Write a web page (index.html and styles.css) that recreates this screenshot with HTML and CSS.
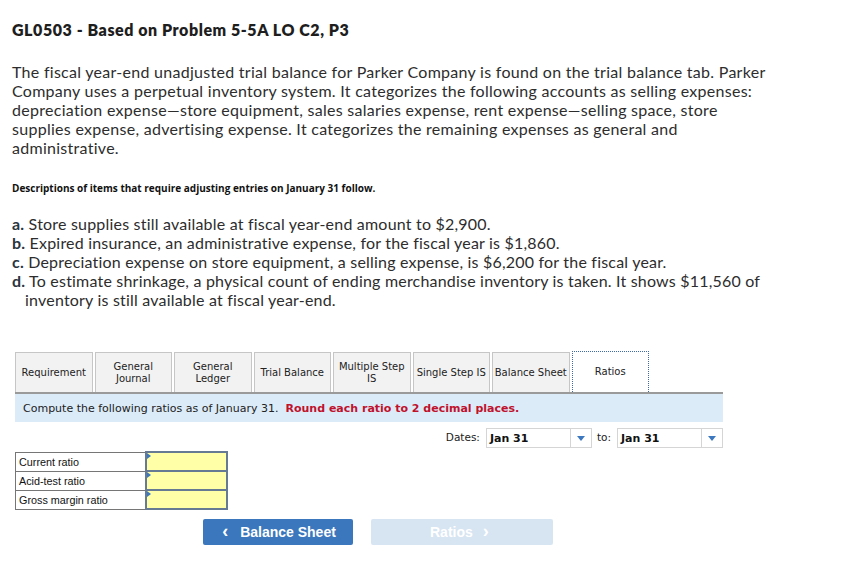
FILE: index.html
```html
<!DOCTYPE html>
<html>
<head>
<meta charset="utf-8">
<link rel="stylesheet" href="styles.css">
</head>
<body>
<div class="page">
  <h1 class="title">GL0503 - Based on Problem 5-5A LO C2, P3</h1>
  <p class="intro">The fiscal year-end unadjusted trial balance for Parker Company is found on the trial balance tab. Parker<br>Company uses a perpetual inventory system. It categorizes the following accounts as selling expenses:<br>depreciation expense—store equipment, sales salaries expense, rent expense—selling space, store<br>supplies expense, advertising expense. It categorizes the remaining expenses as general and<br>administrative.</p>
  <p class="desc">Descriptions of items that require adjusting entries on January 31 follow.</p>
  <ol class="items">
    <li><b>a.</b> Store supplies still available at fiscal year-end amount to $2,900.</li>
    <li><b>b.</b> Expired insurance, an administrative expense, for the fiscal year is $1,860.</li>
    <li><b>c.</b> Depreciation expense on store equipment, a selling expense, is $6,200 for the fiscal year.</li>
    <li><b>d.</b> To estimate shrinkage, a physical count of ending merchandise inventory is taken. It shows $11,560 of<br>inventory is still available at fiscal year-end.</li>
  </ol>

  <div class="widget">
    <div class="tabs">
      <div class="tab">Requirement</div>
      <div class="tab">General<br>Journal</div>
      <div class="tab">General<br>Ledger</div>
      <div class="tab">Trial Balance</div>
      <div class="tab">Multiple Step<br>IS</div>
      <div class="tab">Single Step IS</div>
      <div class="tab">Balance Sheet</div>
      <div class="tab active">Ratios</div>
    </div>
    <div class="instr">Compute the following ratios as of January 31. &nbsp;<span class="red">Round each ratio to 2 decimal places.</span></div>
    <div class="dates">
      <span class="lbl">Dates:</span>
      <div class="sel"><span class="val">Jan 31</span><span class="arrow"></span></div>
      <span class="lbl to">to:</span>
      <div class="sel"><span class="val">Jan 31</span><span class="arrow"></span></div>
    </div>
    <table class="ratios">
      <tr><td class="name">Current ratio</td><td class="inp"><span class="flag"></span></td></tr>
      <tr><td class="name">Acid-test ratio</td><td class="inp"><span class="flag"></span></td></tr>
      <tr><td class="name">Gross margin ratio</td><td class="inp"><span class="flag"></span></td></tr>
    </table>
    <div class="nav">
      <div class="btn prev"><span class="chev">‹</span>Balance Sheet</div>
      <div class="btn next">Ratios<span class="chev r">›</span></div>
    </div>
  </div>
</div>
</body>
</html>
```
FILE: styles.css
```css
html, body { margin: 0; padding: 0; background: #fff; }
.page { padding: 0 0 0 12px; font-family: Lato, "Open Sans", sans-serif; color: #2d2d2d; }
.title { margin: 0; padding-top: 20px; font-size: 16px; line-height: 20px; font-weight: 800; color: #1e1e1e; letter-spacing: 0.55px; }
.intro { margin: 22px 0 0 0; font-size: 16px; line-height: 19px; letter-spacing: 0.28px; }
.desc { margin: 24px 0 0 0; font-family: "Open Sans", sans-serif; font-size: 10px; font-weight: 700; line-height: 14px; color: #111; }
.items { list-style: none; margin: 19px 0 0 0; padding: 0; font-size: 16px; line-height: 19px; letter-spacing: 0.2px; }
.items li { padding-left: 13px; text-indent: -13px; }
.items b { color: #2a3540; }
.widget { margin: 43px 0 0 3px; width: 708px; font-family: "DejaVu Sans", Verdana, sans-serif; }
.tabs { display: flex; gap: 2px; height: 40px; border-bottom: 2px solid #9a9a9a; }
.tab { width: 75.5px; height: 39px; background: #f2f2f2; border: 1px solid #c6c6c6; border-bottom: none; display: flex; align-items: center; justify-content: center; text-align: center; font-size: 10px; line-height: 12px; color: #222; white-space: nowrap; }
.tab.active { background: #fff; border: 1px dotted #3c6aa8; border-bottom: none; height: 40px; margin-top: -1px; margin-bottom: -2px; }
.instr { background: #dbebf8; height: 28px; display: flex; align-items: center; padding-left: 8px; font-size: 11px; color: #222; }
.red { color: #c0122c; font-weight: 700; }
.dates { display: flex; align-items: center; justify-content: flex-end; margin-top: 6px; height: 20px; font-size: 10.5px; color: #222; }
.lbl { margin-right: 6px; margin-top: -3px; }
.lbl.to { margin-left: 5px; }
.sel { width: 104px; height: 18px; border: 1px solid #d5d5d5; display: flex; align-items: stretch; }
.val { flex: 1; font-weight: 700; font-size: 11px; padding-left: 3px; display: flex; align-items: center; color: #111; }
.arrow { width: 20px; border-left: 1px solid #d5d5d5; position: relative; }
.arrow::after { content: ""; position: absolute; left: 6px; top: 7px; border-left: 4px solid transparent; border-right: 4px solid transparent; border-top: 5px solid #3c78c0; }
.ratios { border-collapse: collapse; margin-top: 3px; font-family: "Liberation Sans", Arial, sans-serif; font-size: 10.8px; color: #111; }
.ratios td { height: 17px; padding: 0; }
.name { width: 126px; border: 1px solid #767676; padding-left: 3px !important; }
.inp { width: 79px; background: #ffffa8; border: 2px solid #667a94; position: relative; }
.flag { position: absolute; left: 0; top: 0; border-top: 3px solid transparent; border-bottom: 3px solid transparent; border-left: 4px solid #3c78c0; }
.nav { display: flex; gap: 18px; margin-top: 9px; margin-left: 188px; }
.btn { height: 26px; border-radius: 2px; display: flex; align-items: center; justify-content: center; font-family: "Liberation Sans", Arial, sans-serif; font-weight: 700; font-size: 14px; color: #fff; }
.btn.prev { width: 150px; background: #3a77bc; padding-left: 2px; box-sizing: border-box; }
.btn.next { width: 182px; background: #d7e4f2; justify-content: flex-start; padding-left: 59px; box-sizing: border-box; }
.chev { font-size: 18px; margin-right: 12px; margin-top: -2px; }
.chev.r { margin-left: 10px; margin-right: 0; }
```
